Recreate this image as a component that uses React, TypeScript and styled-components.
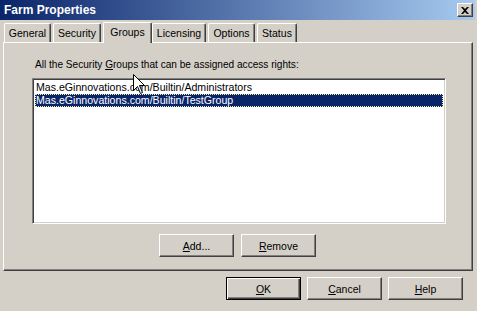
import React from "react";
import styled, { createGlobalStyle } from "styled-components";

const GlobalStyle = createGlobalStyle`
  html, body {
    margin: 0;
    padding: 0;
    background: #d4d0c8;
  }
  body {
    font-family: "Liberation Sans", Arial, sans-serif;
    font-size: 10px;
    color: #000;
  }
`;

const Window = styled.div`
  position: relative;
  width: 477px;
  height: 311px;
  box-sizing: border-box;
  padding-right: 2px;
  background: #d4d0c8;
  display: flex;
  flex-direction: column;
  overflow: hidden;
`;

const TitleBar = styled.div`
  height: 20px;
  display: flex;
  align-items: center;
  justify-content: space-between;
  padding: 0 2px 0 4px;
  background: linear-gradient(to right, #0a246a, #a6caf0);
  color: #fff;
  font-weight: bold;
  font-size: 12px;
`;

const CloseBtn = styled.div`
  width: 16px;
  height: 14px;
  box-sizing: border-box;
  background: #d4d0c8;
  border: 1px solid;
  border-color: #fff #404040 #404040 #fff;
  box-shadow: inset -1px -1px #808080;
  display: flex;
  align-items: center;
  justify-content: center;
`;

const TabStrip = styled.div`
  display: flex;
  align-items: flex-end;
  height: 21px;
  margin-top: 1px;
  padding-left: 4px;
  position: relative;
  z-index: 2;
`;

const Tab = styled.div<{ $w: number; $ml: number; $active?: boolean }>`
  width: ${(p) => p.$w}px;
  margin-left: ${(p) => p.$ml}px;
  height: ${(p) => (p.$active ? 21 : 19)}px;
  margin-bottom: ${(p) => (p.$active ? -1 : 0)}px;
  box-sizing: border-box;
  background: #d4d0c8;
  border-top: 1px solid #fff;
  border-left: 1px solid #fff;
  border-right: 1px solid #404040;
  border-radius: 2px 2px 0 0;
  box-shadow: inset -1px 0 #808080;
  display: flex;
  align-items: center;
  justify-content: center;
  padding-bottom: ${(p) => (p.$active ? 3 : 0)}px;
  font-size: 10.5px;
  white-space: nowrap;
`;

const TabPage = styled.div`
  margin-left: 3px;
  width: 470px;
  height: 229px;
  box-sizing: border-box;
  border: 1px solid;
  border-color: #fff #404040 #404040 #fff;
  box-shadow: inset -1px -1px #808080;
  padding: 15px 27px 0 28px;
  display: flex;
  flex-direction: column;
`;

const Label = styled.div`
  margin-left: 3px;
  height: 13px;
  line-height: 13px;
  font-size: 10.1px;
  white-space: nowrap;
`;

const ListBox = styled.div`
  margin-top: 7px;
  width: 414px;
  height: 146px;
  box-sizing: border-box;
  background: #fff;
  border: 1px solid;
  border-color: #808080 #fff #fff #808080;
  box-shadow: inset 1px 1px #404040, inset -1px -1px #d4d0c8;
  padding: 2px 2px;
  display: flex;
  flex-direction: column;
`;

const ListRow = styled.div<{ $selected?: boolean }>`
  height: 13px;
  line-height: 13px;
  padding-left: 1px;
  font-size: 10.6px;
  white-space: nowrap;
  background: ${(p) => (p.$selected ? "#0a246a" : "transparent")};
  color: ${(p) => (p.$selected ? "#fff" : "#000")};
  outline: ${(p) => (p.$selected ? "1px dotted #f5f0a0" : "none")};
  outline-offset: -1px;
`;

const ButtonRow = styled.div<{ $justify: string }>`
  display: flex;
  justify-content: ${(p) => p.$justify};
  gap: 7px;
`;

const PageButtons = styled(ButtonRow)`
  margin-top: 10px;
  padding-right: 2px;
`;

const DialogButtons = styled(ButtonRow)`
  margin-top: 6px;
  padding-right: 12px;
  gap: 6px;
`;

const Button = styled.div<{ $default?: boolean }>`
  width: 75px;
  height: 23px;
  box-sizing: border-box;
  background: #d4d0c8;
  border: 1px solid;
  border-color: ${(p) => (p.$default ? "#000" : "#fff #404040 #404040 #fff")};
  box-shadow: ${(p) =>
    p.$default
      ? "inset 1px 1px #fff, inset -1px -1px #404040, inset -2px -2px #808080"
      : "inset -1px -1px #808080"};
  display: flex;
  align-items: center;
  justify-content: center;
  font-size: 10.5px;
`;

const Cursor = styled.svg`
  position: absolute;
  left: 133px;
  top: 74px;
  z-index: 5;
`;

export default function App() {
  return (
    <>
      <GlobalStyle />
      <Window>
        <TitleBar>
          <span>Farm Properties</span>
          <CloseBtn>
            <svg width="8" height="7" viewBox="0 0 8 7">
              <path d="M0 0h2l2 2 2-2h2L5 3.5 8 7H6L4 5 2 7H0l3-3.5z" fill="#000" />
            </svg>
          </CloseBtn>
        </TitleBar>
        <TabStrip>
          <Tab $w={47} $ml={0}>General</Tab>
          <Tab $w={48} $ml={2}>Security</Tab>
          <Tab $w={49} $ml={2} $active>Groups</Tab>
          <Tab $w={54} $ml={0}>Licensing</Tab>
          <Tab $w={47} $ml={2}>Options</Tab>
          <Tab $w={40} $ml={2}>Status</Tab>
        </TabStrip>
        <TabPage>
          <Label>
            All the Security <u>G</u>roups that can be assigned access rights:
          </Label>
          <ListBox>
            <ListRow>Mas.eGinnovations.com/Builtin/Administrators</ListRow>
            <ListRow $selected>Mas.eGinnovations.com/Builtin/TestGroup</ListRow>
          </ListBox>
          <PageButtons $justify="center">
            <Button>
              <u>A</u>dd...
            </Button>
            <Button>
              <u>R</u>emove
            </Button>
          </PageButtons>
        </TabPage>
        <DialogButtons $justify="flex-end">
          <Button $default>
            <u>O</u>K
          </Button>
          <Button>
            <u>C</u>ancel
          </Button>
          <Button>
            <u>H</u>elp
          </Button>
        </DialogButtons>
        <Cursor width="13" height="21" viewBox="0 0 13 21">
          <path
            d="M0.5 0.5 L0.5 16.5 L4.5 12.5 L7.5 19.5 L9.5 18.5 L6.5 11.5 L11.5 11.5 Z"
            fill="#fff"
            stroke="#000"
            strokeWidth="1"
          />
        </Cursor>
      </Window>
    </>
  );
}
